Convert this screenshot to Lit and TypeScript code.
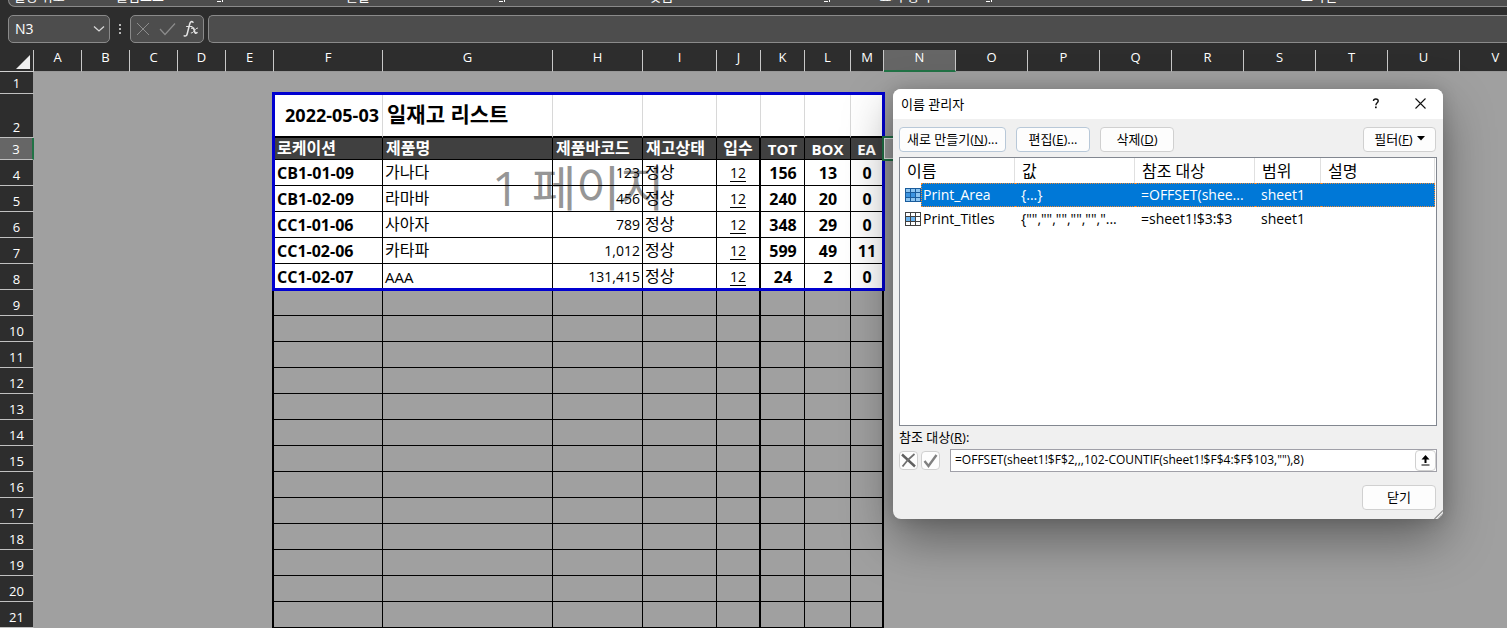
import { LitElement, html, css, svg, nothing } from "lit";
import { customElement, property, state } from "lit/decorators.js";
import { classMap } from "lit/directives/class-map.js";
import { styleMap } from "lit/directives/style-map.js";

interface Column {
  name: string;
  width: number;
}

interface StockRow {
  location: string;
  product: string;
  barcode: string;
  status: string;
  pack: string;
  total: string;
  box: string;
  each: string;
}

const COLUMNS: Column[] = [
  ...["A", "B", "C", "D", "E"].map((name) => ({ name, width: 48 })),
  { name: "F", width: 109 },
  { name: "G", width: 170 },
  { name: "H", width: 90 },
  { name: "I", width: 74 },
  { name: "J", width: 44 },
  { name: "K", width: 44 },
  { name: "L", width: 46 },
  { name: "M", width: 33 },
  ...["N", "O", "P", "Q", "R", "S", "T", "U", "V"].map((name) => ({ name, width: 72 })),
];

const ROW_COUNT = 22;
const HEADINGS = ["로케이션", "제품명", "제품바코드", "재고상태", "입수", "TOT", "BOX", "EA"];
const KEYS: (keyof StockRow)[] = ["location", "product", "barcode", "status", "pack", "total", "box", "each"];

const STOCK: StockRow[] = [
  { location: "CB1-01-09", product: "가나다", barcode: "123", status: "정상", pack: "12", total: "156", box: "13", each: "0" },
  { location: "CB1-02-09", product: "라마바", barcode: "456", status: "정상", pack: "12", total: "240", box: "20", each: "0" },
  { location: "CC1-01-06", product: "사아자", barcode: "789", status: "정상", pack: "12", total: "348", box: "29", each: "0" },
  { location: "CC1-02-06", product: "카타파", barcode: "1,012", status: "정상", pack: "12", total: "599", box: "49", each: "11" },
  { location: "CC1-02-07", product: "AAA", barcode: "131,415", status: "정상", pack: "12", total: "24", box: "2", each: "0" },
];

const FONT = css`"Open Sans", "Noto Sans CJK KR", sans-serif`;

@customElement("ribbon-strip")
export class RibbonStrip extends LitElement {
  static styles = css`
    :host {
      display: block;
      padding-left: 8px;
      font-family: ${FONT};
    }
    .panel {
      display: grid;
      grid-template-columns: 64px 154px 282px 325px 162px 650px;
      align-content: end;
      box-sizing: border-box;
      height: 7px;
      overflow: hidden;
      background: #4d4d4d;
      border: 1px solid #8a8a8a;
      border-top: 0;
      border-right: 0;
      border-bottom-left-radius: 7px;
    }
    .group {
      display: flex;
      align-items: flex-end;
      padding-right: 4px;
      color: #fff;
      font-size: 13px;
      line-height: 16px;
    }
    .label {
      flex: 1;
      padding-bottom: 2px;
      text-align: center;
      white-space: nowrap;
    }
    .launcher {
      width: 6px;
      height: 6px;
      margin-bottom: 4px;
      padding-left: 10px;
    }
  `;

  render() {
    const groups: [string, boolean][] = [
      ["실행 취소", false],
      ["클립보드", true],
      ["글꼴", true],
      ["맞춤", true],
      ["표시 형식", true],
      ["스타일", false],
    ];
    return html`<div class="panel">
      ${groups.map(
        ([label, launcher]) => html`<div class="group">
          <span class="label">${label}</span>
          ${launcher
            ? html`<svg class="launcher" viewBox="0 0 6 6"><path d="M0 5.5h4M5.5 2v4" stroke="#fff" fill="none" /></svg>`
            : nothing}
        </div>`
      )}
    </div>`;
  }
}

@customElement("formula-bar")
export class FormulaBar extends LitElement {
  @property() cell = "";

  static styles = css`
    :host {
      display: flex;
      align-items: center;
      padding: 8px 0 7px 8px;
      font-family: ${FONT};
    }
    .box {
      display: flex;
      align-items: center;
      box-sizing: border-box;
      height: 28px;
      background: #4d4d4d;
      border: 1px solid #8a8a8a;
      border-radius: 5px;
    }
    .name {
      width: 102px;
    }
    input {
      flex: 1;
      min-width: 0;
      height: 24px;
      padding: 0 6px;
      border: 0;
      outline: 0;
      background: transparent;
      color: #fff;
      font: 14px/24px ${FONT};
    }
    button {
      display: grid;
      place-items: center;
      height: 26px;
      padding: 0;
      border: 0;
      background: transparent;
    }
    .drop {
      width: 20px;
    }
    .dots {
      width: 20px;
      height: 28px;
    }
    .actions {
      width: 74px;
    }
    .actions button {
      flex: 1;
    }
    .formula {
      flex: 1;
      margin-left: 4px;
      border-right: 0;
      border-radius: 5px 0 0 5px;
    }
  `;

  render() {
    return html`
      <div class="box name">
        <input aria-label="이름 상자" .value=${this.cell} />
        <button class="drop" aria-label="이름 목록">
          <svg width="12" height="8" viewBox="0 0 12 8"><path d="M1 1.5l5 4.5 5-4.5" fill="none" stroke="#d8d8d8" stroke-width="1.3" /></svg>
        </button>
      </div>
      <svg class="dots" viewBox="0 0 20 28">
        <path d="M9 9h2v2H9zM9 13h2v2H9zM9 17h2v2H9z" fill="#b8b8b8" />
      </svg>
      <div class="box actions">
        <button aria-label="취소">
          <svg width="14" height="14" viewBox="0 0 14 14"><path d="M1 1l12 12M13 1L1 13" stroke="#8c8c8c" fill="none" /></svg>
        </button>
        <button aria-label="입력">
          <svg width="17" height="14" viewBox="0 0 17 14"><path d="M1 7l5 5.500L16 1.500" stroke="#8c8c8c" fill="none" stroke-width="1.200" /></svg>
        </button>
        <button aria-label="함수 삽입">
          <svg width="16" height="18" viewBox="0 0 16 18" fill="none" stroke="#e4e4e4" stroke-linecap="round">
            <path d="M10 2.200C8.800 1 7.300 1.600 6.700 4L4.300 13.500C3.800 15.700 2.700 16.600 1.200 15.800" stroke-width="1.500" />
            <path d="M3.600 6.500H9" stroke-width="1.200" />
            <path d="M8.800 8.200c1.600-1 2 0 2.500 2.300s1 3.300 2.700 2.200" stroke-width="1.600" />
            <path d="M14.600 8c-2.200-.6-3.800 5.600-6.400 5" stroke-width="1" />
          </svg>
        </button>
      </div>
      <div class="box formula"><input aria-label="수식 입력줄" /></div>
    `;
  }
}

@customElement("sheet-grid")
export class SheetGrid extends LitElement {
  @property() activeColumn = "N";
  @property({ type: Number }) activeRow = 3;

  static styles = css`
    :host {
      display: block;
      position: relative;
      background: #a0a0a0;
      font-family: ${FONT};
    }
    /* The table starts at the column letters; the print area covers F2:M8. */
    .paper,
    .frame {
      position: absolute;
      left: 272px;
      top: 42px;
      box-sizing: border-box;
      width: 613px;
      height: 199px;
    }
    .paper {
      background: #fff;
    }
    .frame {
      border: 3px solid #0000d0;
    }
    .watermark {
      position: absolute;
      left: 220px;
      top: 64px;
      color: #969696;
      font-size: 48px;
      line-height: 64px;
      white-space: nowrap;
    }
    .cursor {
      position: absolute;
      left: 882px;
      top: 86px;
      box-sizing: border-box;
      width: 75px;
      height: 25px;
      border: 2px solid #217346;
      box-shadow: inset 0 0 0 1px #e8e8e8;
    }
    table {
      position: relative;
      table-layout: fixed;
      border-collapse: separate;
      border-spacing: 0;
      color: #000;
    }
    th,
    td {
      box-sizing: border-box;
      padding: 0;
      overflow: hidden;
      white-space: nowrap;
      font-weight: 400;
    }
    thead th {
      height: 22px;
      padding-bottom: 6px;
      background: #2d2d2d;
      border-right: 1px solid #c8c8c8;
      border-bottom: 1px solid #989898;
      color: #fff;
      font-size: 13px;
      line-height: 15px;
    }
    thead .corner {
      padding: 4px 3px 2px 0;
      border-bottom-color: #d0d0d0;
      text-align: right;
      line-height: 14px;
    }
    .corner svg {
      display: inline-block;
      vertical-align: top;
    }
    thead .active {
      background: #666;
      border-bottom: 2px solid #217346;
      padding-bottom: 5px;
    }
    tbody th {
      height: 26px;
      padding-bottom: 1px;
      background: #2d2d2d;
      border-right: 1px solid #a0a0a0;
      border-bottom: 1px solid #c0c0c0;
      color: #fff;
      font-size: 13px;
      line-height: 18px;
      vertical-align: bottom;
    }
    tbody th.active {
      background: #666;
      border-right: 2px solid #217346;
    }
    .row1 th {
      height: 22px;
    }
    .row2 th {
      height: 44px;
    }
    .row3 th {
      height: 22px;
    }
    .title {
      border-right: 1px solid #d8d8d8;
      border-bottom: 2px solid #000;
      font-weight: 700;
      line-height: 28px;
    }
    .date {
      padding-right: 3px;
      text-align: right;
      font-size: 18px;
    }
    .name {
      padding-left: 4px;
      padding-bottom: 2px;
      font-size: 21px;
      overflow: visible;
    }
    .cell {
      padding: 0 2px;
      border-right: 1px solid #000;
      border-bottom: 1px solid #000;
      font-size: 14px;
      line-height: 20px;
    }
    .product {
      font-size: 15px;
    }
    .heavy {
      border-right: 2px solid #000;
    }
    .edge {
      border-right: 2px solid #000;
    }
    .bold {
      padding-left: 3px;
      font-size: 16px;
      font-weight: 700;
    }
    .heading {
      padding: 0 3px;
      background: #404040;
      color: #fff;
      font-size: 15px;
      font-weight: 700;
    }
    .korean {
      padding-bottom: 2px;
      font-size: 16px;
    }
    .korean.heading {
      padding-bottom: 1px;
    }
    .center {
      text-align: center;
    }
    .right {
      text-align: right;
    }
    .pack {
      display: inline-block;
      line-height: 17px;
      border-bottom: 1px solid #000;
    }
  `;

  private cell(row: number, index: number) {
    const column = index - 5;
    if (column < 0 || column > 7) {
      return html`<td class=${classMap({ edge: index === 4 && row > 2 })}></td>`;
    }
    if (row === 1) return html`<td></td>`;
    if (row === 2) {
      return html`<td class=${classMap({ title: true, date: column === 0, name: column === 1 })}>${["2022-05-03", "일재고 리스트"][column] ?? ""}</td>`;
    }
    const base = { cell: true, heavy: column === 4 || column === 7 };
    if (row === 3) {
      return html`<td class=${classMap({ ...base, heading: true, korean: column < 5, center: column > 3 })}>${HEADINGS[column]}</td>`;
    }
    const item = STOCK[row - 4];
    if (!item) return html`<td class=${classMap(base)}></td>`;
    const text = item[KEYS[column]];
    const classes = {
      ...base,
      bold: column === 0 || column > 4,
      product: column === 1,
      korean: column === 3 || (column === 1 && text !== "AAA"),
      right: column === 2,
      center: column > 3,
    };
    return html`<td class=${classMap(classes)}>${column === 4 ? html`<span class="pack">${text}</span>` : text}</td>`;
  }

  render() {
    const width = COLUMNS.reduce((sum, column) => sum + column.width, 34);
    const rows = Array.from({ length: ROW_COUNT }, (_, i) => i + 1);
    return html`
      <div class="paper"><span class="watermark">1 페이지</span></div>
      <table style=${styleMap({ width: `${width}px` })}>
        <colgroup>
          <col style=${styleMap({ width: "34px" })} />
          ${COLUMNS.map((column) => html`<col style=${styleMap({ width: `${column.width}px` })} />`)}
        </colgroup>
        <thead>
          <tr>
            <th class="corner"><svg width="14" height="14" viewBox="0 0 14 14"><path d="M14 0v14H0z" fill="#f0f0f0" /></svg></th>
            ${COLUMNS.map(({ name }) => html`<th scope="col" class=${classMap({ active: name === this.activeColumn })}>${name}</th>`)}
          </tr>
        </thead>
        <tbody>
          ${rows.map(
            (row) => html`<tr class="row${row}">
              <th scope="row" class=${classMap({ active: row === this.activeRow })}>${row}</th>
              ${COLUMNS.map((_, index) => this.cell(row, index))}
            </tr>`
          )}
        </tbody>
      </table>
      <div class="frame"></div>
      <div class="cursor"></div>
    `;
  }
}

@customElement("name-manager")
export class NameManager extends LitElement {
  @state() private selected = 0;

  private names = [
    { name: "Print_Area", value: "{...}", refers: "=OFFSET(shee...", scope: "sheet1" },
    { name: "Print_Titles", value: '{"","","","","","...', refers: "=sheet1!$3:$3", scope: "sheet1" },
  ];

  static styles = css`
    :host {
      display: block;
      box-sizing: border-box;
      background: #f0f0f0;
      border-radius: 8px;
      box-shadow: 0 20px 50px rgba(0, 0, 0, 0.4), 0 0 16px rgba(0, 0, 0, 0.15);
      color: #000;
      font-family: ${FONT};
      font-size: 12px;
      overflow: hidden;
    }
    .titlebar {
      display: flex;
      align-items: center;
      box-sizing: border-box;
      height: 30px;
      padding: 0 0 2px 8px;
      background: #fff;
    }
    h1 {
      flex: 1;
      margin: 0;
      font-size: 13px;
      font-weight: 400;
    }
    button {
      display: inline-flex;
      align-items: center;
      justify-content: center;
      box-sizing: border-box;
      height: 25px;
      padding: 0;
      border: 1px solid #d0d0d0;
      border-radius: 4px;
      background: #fdfdfd;
      color: #000;
      font: 13px/16px ${FONT};
      white-space: nowrap;
    }
    .titlebar button {
      width: 45px;
      border: 0;
      background: transparent;
    }
    .body {
      padding: 8px 6px 9px;
    }
    .toolbar {
      display: flex;
      gap: 10px;
      margin-bottom: 5px;
      padding-right: 1px;
    }
    .toolbar button,
    .footer button {
      width: 74px;
      padding-bottom: 2px;
    }
    .toolbar .new {
      width: 107px;
    }
    .toolbar .new,
    .toolbar .edit {
      border-color: #b8c8d8;
    }
    .toolbar .filter {
      width: 73px;
      margin-left: auto;
      gap: 4px;
    }
    .list {
      box-sizing: border-box;
      height: 269px;
      padding-right: 1px;
      border: 1px solid #828790;
      background: #fff;
    }
    table {
      width: 100%;
      table-layout: fixed;
      border-collapse: separate;
      border-spacing: 0;
      font-size: 14px;
      line-height: 22px;
    }
    .c-name {
      width: 115px;
    }
    .c-mid {
      width: 120px;
    }
    .c-scope {
      width: 66px;
    }
    th {
      height: 25px;
      padding: 0 0 0 7px;
      border-right: 1px solid #e0e0e0;
      font-size: 16px;
      font-weight: 400;
      text-align: left;
    }
    td {
      box-sizing: border-box;
      height: 24px;
      padding: 0 0 0 6px;
      border: 1px solid transparent;
      border-width: 1px 0;
      white-space: nowrap;
    }
    td.first {
      padding-left: 5px;
      border-width: 0;
    }
    .entry {
      display: flex;
      align-items: center;
    }
    .entry span {
      flex: 1;
      padding-left: 1px;
      border: 1px solid transparent;
      border-right: 0;
    }
    .chosen td:not(.first),
    .chosen span {
      background: #0078d7;
      border-color: #f08a30;
      border-style: dotted;
      color: #fff;
    }
    .chosen td:last-child {
      border-right-width: 1px;
    }
    label {
      display: block;
      padding: 3px 0;
      font-size: 13px;
      line-height: 17px;
    }
    .reference {
      display: flex;
      align-items: center;
      gap: 3px;
    }
    .reference .small {
      width: 19px;
      height: 19px;
    }
    .field {
      display: flex;
      flex: 1;
      align-items: center;
      box-sizing: border-box;
      height: 23px;
      margin-left: 7px;
      border: 1px solid #a0a0a8;
      background: #fff;
    }
    .field input {
      flex: 1;
      min-width: 0;
      height: 21px;
      padding: 0 4px 2px;
      box-sizing: border-box;
      border: 0;
      outline: 0;
      background: transparent;
      font: 12px/19px ${FONT};
    }
    .field button {
      width: 21px;
      height: 21px;
    }
    .footer {
      display: flex;
      justify-content: flex-end;
      padding: 13px 1px 0 0;
    }
    .grip {
      position: absolute;
      right: 0;
      bottom: 0;
    }
  `;

  private icon(chosen: boolean) {
    const line = chosen ? "#1a5c9c" : "#404040";
    const paper = chosen ? "#8cc4f0" : "#fff";
    return svg`<svg width="16" height="14" viewBox="0 0 16 14">
      <rect x=".5" y=".5" width="15" height="13" fill=${paper} stroke=${line} />
      <rect x="1" y="5" width="10" height="5" fill=${chosen ? "#3c94e0" : "#6cb4f0"} />
      <path d="M5.500 1v12M10.500 1v12M1 4.500h14M1 9.500h14" stroke=${line} fill="none" />
    </svg>`;
  }

  render() {
    return html`
      <div class="titlebar">
        <h1>이름 관리자</h1>
        <button aria-label="도움말">
          <svg width="8" height="11" viewBox="0 0 8 11"><path d="M1.500 3c0-2.600 4.700-2.600 4.700 0 0 1.800-2.300 1.800-2.300 4.200" fill="none" stroke="#111" stroke-width="1.400" /><rect x="3" y="8.500" width="1.700" height="1.700" fill="#111" /></svg>
        </button>
        <button aria-label="창 닫기">
          <svg width="11" height="11" viewBox="0 0 11 11"><path d="M.5.5l10 10M10.500.5l-10 10" stroke="#111" stroke-width="1.100" /></svg>
        </button>
      </div>
      <div class="body">
        <div class="toolbar">
          <button class="new"><span>새로 만들기(<u>N</u>)...</span></button>
          <button class="edit"><span>편집(<u>E</u>)...</span></button>
          <button><span>삭제(<u>D</u>)</span></button>
          <button class="filter"><span>필터(<u>F</u>)</span><svg width="8" height="5" viewBox="0 0 8 5"><path d="M0 0h8L4 4.500z" /></svg></button>
        </div>
        <div class="list">
          <table>
            <colgroup>
              <col class="c-name" /><col class="c-mid" /><col class="c-mid" /><col class="c-scope" /><col />
            </colgroup>
            <thead>
              <tr><th>이름</th><th>값</th><th>참조 대상</th><th>범위</th><th>설명</th></tr>
            </thead>
            <tbody>
              ${this.names.map(
                (entry, i) => html`<tr class=${classMap({ chosen: i === this.selected })} @click=${() => (this.selected = i)}>
                  <td class="first"><div class="entry">${this.icon(i === this.selected)}<span>${entry.name}</span></div></td>
                  <td>${entry.value}</td>
                  <td>${entry.refers}</td>
                  <td>${entry.scope}</td>
                  <td></td>
                </tr>`
              )}
            </tbody>
          </table>
        </div>
        <label for="refers">참조 대상(<u>R</u>):</label>
        <div class="reference">
          <button class="small" aria-label="취소">
            <svg width="15" height="15" viewBox="0 0 15 15"><path d="M1 1.500L14 13.500" stroke="#606060" stroke-width="2.400" /><path d="M13.500 1C9 4.500 5 8.500 1.500 13.500" fill="none" stroke="#707070" stroke-width="1.800" /></svg>
          </button>
          <button class="small" aria-label="적용">
            <svg width="15" height="15" viewBox="0 0 15 15"><path d="M1.500 8l4 5L13.500 2" fill="none" stroke="#808080" stroke-width="2.400" /></svg>
          </button>
          <div class="field">
            <input id="refers" value='=OFFSET(sheet1!$F$2,,,102-COUNTIF(sheet1!$F$4:$F$103,""),8)' />
            <button aria-label="대화 상자 축소">
              <svg width="9" height="11" viewBox="0 0 9 11"><path d="M4.500 0l4 4.500h-3V8h-2V4.500h-3zM.5 9.500h8v1h-8z" /></svg>
            </button>
          </div>
        </div>
        <div class="footer"><button>닫기</button></div>
      </div>
      <svg class="grip" width="9" height="9" viewBox="0 0 9 9"><path d="M0 9L9 0v9z" fill="#f8f8f8" /><path d="M.5 9L9 .5M4 9l5-5" stroke="#909090" stroke-width="1.300" /></svg>
    `;
  }
}

@customElement("app-root")
export class AppRoot extends LitElement {
  static styles = css`
    :host {
      display: flex;
      flex-direction: column;
      position: relative;
      height: 100vh;
      overflow: hidden;
      background: #2d2d2d;
    }
    .sheet {
      flex: 1;
      min-height: 0;
      overflow: hidden;
    }
    .window {
      position: absolute;
      left: 893px;
      top: 89px;
      width: 550px;
    }
  `;

  render() {
    return html`
      <ribbon-strip></ribbon-strip>
      <formula-bar cell="N3"></formula-bar>
      <sheet-grid class="sheet"></sheet-grid>
      <name-manager class="window" role="dialog" aria-label="이름 관리자"></name-manager>
    `;
  }
}
